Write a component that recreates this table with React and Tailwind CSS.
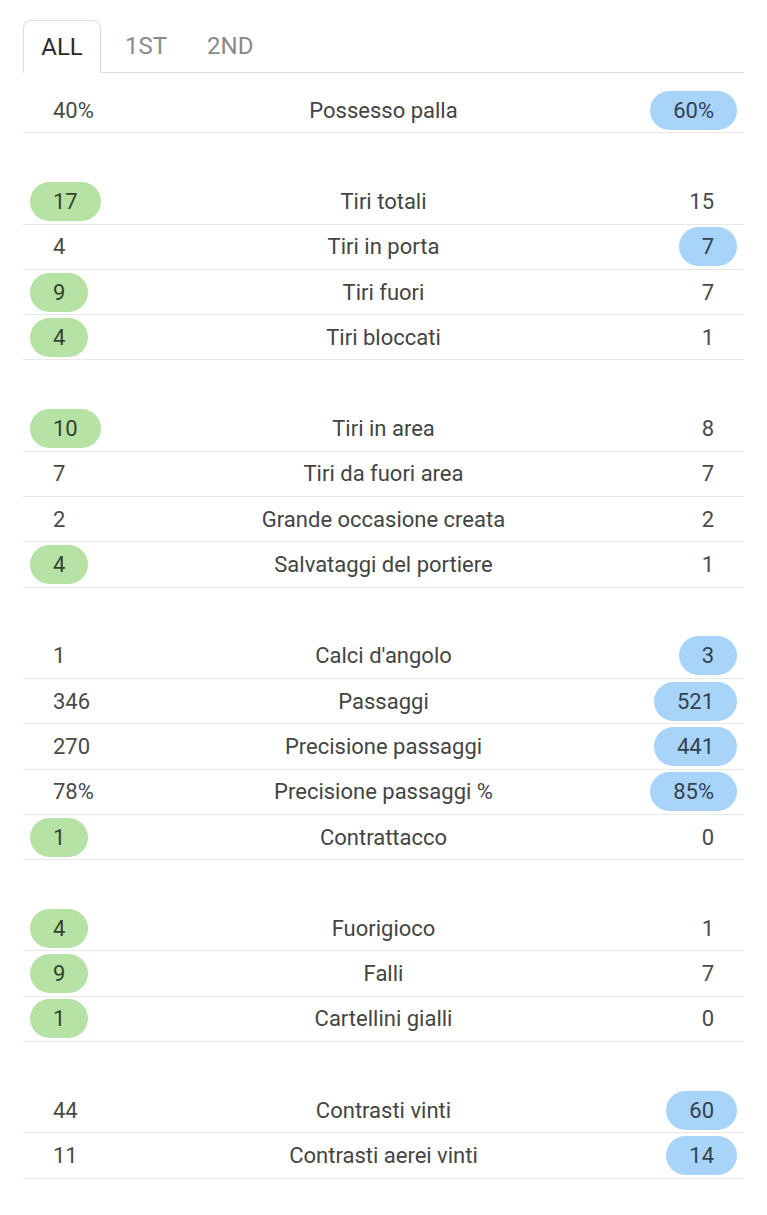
import React from "react";

const groups = [
  [["40%", "Possesso palla", "60%", "r"]],
  [
    ["17", "Tiri totali", "15", "l"],
    ["4", "Tiri in porta", "7", "r"],
    ["9", "Tiri fuori", "7", "l"],
    ["4", "Tiri bloccati", "1", "l"],
  ],
  [
    ["10", "Tiri in area", "8", "l"],
    ["7", "Tiri da fuori area", "7", ""],
    ["2", "Grande occasione creata", "2", ""],
    ["4", "Salvataggi del portiere", "1", "l"],
  ],
  [
    ["1", "Calci d'angolo", "3", "r"],
    ["346", "Passaggi", "521", "r"],
    ["270", "Precisione passaggi", "441", "r"],
    ["78%", "Precisione passaggi %", "85%", "r"],
    ["1", "Contrattacco", "0", "l"],
  ],
  [
    ["4", "Fuorigioco", "1", "l"],
    ["9", "Falli", "7", "l"],
    ["1", "Cartellini gialli", "0", "l"],
  ],
  [
    ["44", "Contrasti vinti", "60", "r"],
    ["11", "Contrasti aerei vinti", "14", "r"],
  ],
];

function Val({ v, hi, side }) {
  const base = "h-[39px] flex items-center px-[23px] rounded-full";
  if (hi) {
    return (
      <span
        className={
          base +
          (side === "l"
            ? " bg-[#b6e3a5] text-[#36432f]"
            : " bg-[#a9d4fa] text-[#35414f]")
        }
      >
        {v}
      </span>
    );
  }
  return <span className={base + " text-[#4a4a4a]"}>{v}</span>;
}

export default function App() {
  return (
    <div
      className="w-[767px] h-[1215px] bg-white px-[23px] pt-[20px] text-[22px] text-[#444]"
      style={{ fontFamily: "Roboto, 'Liberation Sans', sans-serif" }}
    >
      <div className="flex items-end border-b border-[#dedede] w-[721px] h-[53px] text-[24px]">
        <div className="h-[53px] w-[78px] -mb-px border border-[#dedede] border-b-white bg-white rounded-t-[8px] flex items-center justify-center text-[#2a2a2a]">
          ALL
        </div>
        <div className="h-[52px] flex items-center pl-[24px] text-[#8a8a8a]">1ST</div>
        <div className="h-[52px] flex items-center pl-[40px] text-[#8a8a8a]">2ND</div>
      </div>
      <div className="pt-[15px] w-[721px]">
        {groups.map((g, gi) => (
          <div key={gi} className={gi > 0 ? "mt-[46px]" : ""}>
            {g.map(([a, label, b, hi], i) => (
              <div
                key={i}
                className="h-[45.3px] border-b border-[#e8e8e8] flex items-center justify-between px-[7px]"
              >
                <div className="w-[150px] flex justify-start">
                  <Val v={a} hi={hi === "l"} side="l" />
                </div>
                <div className="flex-1 text-center text-[#444]">{label}</div>
                <div className="w-[150px] flex justify-end">
                  <Val v={b} hi={hi === "r"} side="r" />
                </div>
              </div>
            ))}
          </div>
        ))}
      </div>
    </div>
  );
}
